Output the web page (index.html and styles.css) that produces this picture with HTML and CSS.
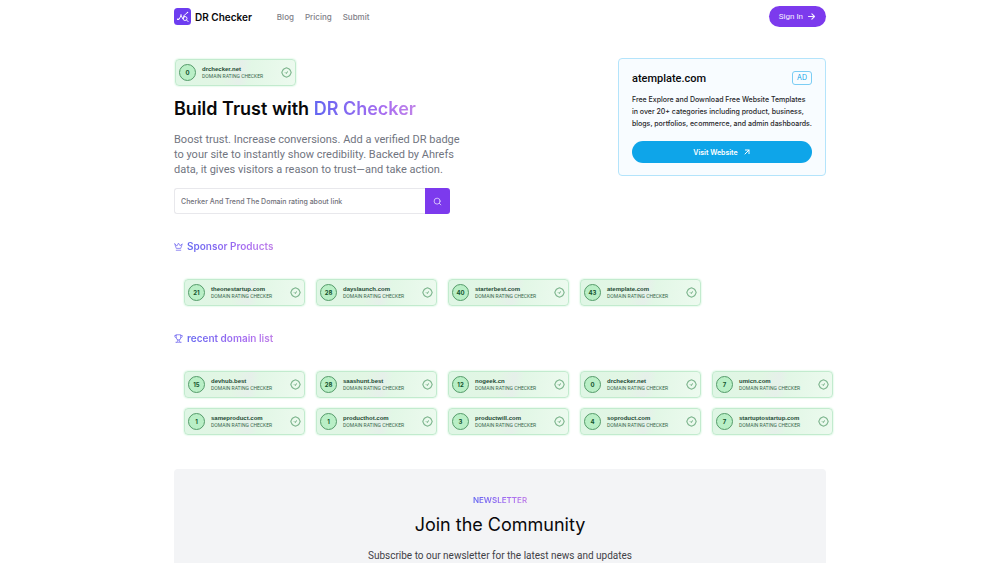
FILE: index.html
```html
<!DOCTYPE html>
<html lang="en">

<head>
  <meta charset="utf-8">
  <meta name="viewport" content="width=device-width, initial-scale=1">
  <title>DR Checker</title>
  <link rel="stylesheet" href="styles.css">
</head>

<body>
  <svg class="sprite" aria-hidden="true">
    <symbol id="icon-check" viewBox="0 0 24 24">
      <path d="M3.850 8.620a4 4 0 0 1 4.780-4.770 4 4 0 0 1 6.740 0 4 4 0 0 1 4.780 4.780 4 4 0 0 1 0 6.740 4 4 0 0 1-4.770 4.780 4 4 0 0 1-6.750 0 4 4 0 0 1-4.780-4.770 4 4 0 0 1 0-6.760z" />
      <path d="M9 12l2 2 4-4" />
    </symbol>
  </svg>

  <header class="container navbar">
    <a href="#" class="brand">
      <svg class="logo" viewBox="0 0 34 34">
        <rect width="34" height="34" rx="7" fill="#6d3df0" />
        <g fill="none" stroke="#fff" stroke-width="1.800">
          <path d="M6 23h4l4-8 4 7 3-6M18 17l9-8" />
          <circle cx="22" cy="21" r="4" />
          <path d="M25 24l4 4" />
        </g>
        <circle cx="8" cy="22" r="1.500" fill="#fff" />
        <circle cx="14" cy="14" r="1.500" fill="#fff" />
        <circle cx="27" cy="9" r="1.500" fill="#fff" />
      </svg>
      DR Checker
    </a>
    <nav>
      <a href="#">Blog</a>
      <a href="#">Pricing</a>
      <a href="#">Submit</a>
    </nav>
    <a href="#" class="sign-in">
      Sign In
      <svg class="icon" viewBox="0 0 24 24"><path d="M4 12h16M13 5l7 7-7 7" /></svg>
    </a>
  </header>

  <main class="container">
    <section class="hero">
      <div class="intro">
        <a href="#" class="badge">
          <span class="score">0</span>
          <span class="domain"><b>drchecker.net</b><small>DOMAIN RATING CHECKER</small></span>
          <svg class="check"><use href="#icon-check" /></svg>
        </a>
        <h1>Build Trust with <span class="gradient">DR Checker</span></h1>
        <p>Boost trust. Increase conversions. Add a verified DR badge<br>
          to your site to instantly show credibility. Backed by Ahrefs<br>
          data, it gives visitors a reason to trust—and take action.</p>
        <form class="search">
          <input type="text" aria-label="Domain" placeholder="Cherker And Trend The Domain rating about link">
          <button type="submit" aria-label="Search">
            <svg class="icon" viewBox="0 0 24 24"><circle cx="11" cy="11" r="8" /><path d="M17 17l4 4" /></svg>
          </button>
        </form>
      </div>

      <aside class="ad">
        <div class="ad-head">
          <h2>atemplate.com</h2>
          <span class="ad-tag">AD</span>
        </div>
        <p>Free Explore and Download Free Website Templates<br>
          in over 20+ categories including product, business,<br>
          blogs, portfolios, ecommerce, and admin dashboards.</p>
        <a href="#" class="visit">
          Visit Website
          <svg class="icon" viewBox="0 0 24 24"><path d="M6 18L18 6M7 6h11v11" /></svg>
        </a>
      </aside>
    </section>

    <section class="listing">
      <h2>
        <svg class="icon" viewBox="0 0 24 24"><path d="M2 5l4 12h12l4-12-6 5-4-7-4 7zM6 22h12" /></svg>
        <span class="gradient">Sponsor Products</span>
      </h2>
      <div class="badges" id="sponsors"></div>
    </section>

    <section class="listing">
      <h2>
        <svg class="icon" viewBox="0 0 24 24"><path d="M6 2h12v8a6 6 0 0 1-12 0zM6 4H2v2c0 3 2 4 4 4M18 4h4v2c0 3-2 4-4 4M10 16v3l-3 3M14 16v3l3 3M5 22h14" /></svg>
        <span class="gradient">recent domain list</span>
      </h2>
      <div class="badges" id="recent"></div>
    </section>

    <section class="newsletter">
      <h3 class="gradient">NEWSLETTER</h3>
      <h2>Join the Community</h2>
      <p>Subscribe to our newsletter for the latest news and updates</p>
    </section>
  </main>
  <script src="badges.js"></script>
</body>

</html>
```
FILE: styles.css
```css
* {
  box-sizing: border-box;
}

body {
  margin: 0;
  font-family: Roboto, "Liberation Sans", sans-serif;
  color: #09090b;
  background: #fff;
  overflow-x: hidden;
}

h1,
h2,
h3,
p {
  margin: 0;
}

a {
  color: inherit;
  text-decoration: none;
}

.sprite {
  display: none;
}

.container {
  max-width: 652px;
  margin: 0 auto;
}

.icon {
  width: 9px;
  height: 9px;
  fill: none;
  stroke: currentColor;
  stroke-width: 2;
  stroke-linecap: round;
  stroke-linejoin: round;
}

.gradient {
  color: transparent;
  background: linear-gradient(to right, #6366f1, #a96df0 70%, #c084e8);
  background-clip: text;
  -webkit-background-clip: text;
}

.navbar {
  display: flex;
  align-items: center;
  height: 33px;
}

.brand {
  display: flex;
  align-items: center;
  gap: 4px;
  font-family: Inter, sans-serif;
  font-size: 10px;
  font-weight: 600;
}

.logo {
  width: 17px;
  height: 17px;
}

.navbar nav {
  display: flex;
  flex: 1;
  gap: 11px;
  margin-left: 25px;
  font-family: Inter, sans-serif;
  font-size: 8px;
  font-weight: 500;
  color: #808087;
}

.sign-in {
  display: flex;
  align-items: center;
  gap: 4px;
  height: 21px;
  padding: 0 10px;
  border-radius: 11px;
  font-size: 8px;
  color: #f5f0ff;
  background: #7c3aed;
}

.sign-in .icon {
  stroke-width: 3;
}

.hero {
  display: flex;
  justify-content: space-between;
  align-items: flex-start;
  padding-top: 25px;
}

.intro .badge {
  margin: 1px;
}

.intro h1 {
  margin-top: 11px;
  font-family: Inter, sans-serif;
  font-size: 18px;
  line-height: 24px;
  font-weight: 600;
}

.intro p {
  margin-top: 11px;
  font-size: 11px;
  line-height: 15px;
  color: #71757f;
}

.search {
  display: flex;
  max-width: 276px;
  height: 26px;
  margin-top: 11px;
}

.search input {
  flex: 1;
  min-width: 0;
  padding: 0 6px;
  border: 1px solid #e8e8ec;
  border-right: 0;
  border-radius: 3px 0 0 3px;
  font: 500 7px Inter, sans-serif;
}

.search input::placeholder {
  color: #71717a;
}

.search button {
  display: flex;
  align-items: center;
  justify-content: center;
  width: 25px;
  padding: 0;
  border: 0;
  border-radius: 0 3px 3px 0;
  color: #eee5ff;
  background: #7c3aed;
}

.ad {
  padding: 12px 13px;
  border: 1px solid #b4e4fb;
  border-radius: 4px;
  font-family: Inter, sans-serif;
  background: #f8fcff;
}

.ad-head {
  display: flex;
  justify-content: space-between;
  align-items: center;
}

.ad-head h2 {
  font-family: Roboto, sans-serif;
  font-size: 11px;
  font-weight: 500;
}

.ad-tag {
  padding: 0 4px;
  border: 1px solid #7bcdf4;
  border-radius: 3px;
  font-size: 7px;
  line-height: 12px;
  color: #0ea5e9;
}

.ad p {
  margin-top: 9px;
  font-size: 7px;
  line-height: 12px;
  font-weight: 500;
  color: #27272a;
}

.visit {
  display: flex;
  align-items: center;
  justify-content: center;
  gap: 5px;
  height: 22px;
  margin-top: 11px;
  border-radius: 11px;
  font-size: 7px;
  font-weight: 600;
  color: #fff;
  background: #0ea5e9;
}

.visit .icon {
  width: 8px;
  height: 8px;
  stroke-width: 3;
}

.listing {
  padding-top: 24px;
}

.listing h2 {
  display: flex;
  align-items: center;
  gap: 4px;
  font-family: Inter, sans-serif;
  font-size: 10px;
  line-height: 16px;
  font-weight: 600;
  color: #7168ef;
}

.badges {
  display: flex;
  flex-wrap: wrap;
  gap: 10px 11px;
  margin: 25px -8px 0 10px;
}

.badge {
  display: flex;
  align-items: center;
  width: 121px;
  height: 27px;
  padding: 0 3px;
  border: 1px solid #c2ebce;
  border-radius: 4px;
  background: linear-gradient(100deg, #dff6e5, #e2f6e4 40%, #e6f0ea 54%, #e2f7e6 62%, #edfaef);
  box-shadow: 0 0 2px #b9efc8;
}

.score {
  width: 17px;
  border: 1px solid #559b6a;
  border-radius: 50%;
  font-family: Inter, sans-serif;
  font-size: 6px;
  line-height: 15px;
  font-weight: 700;
  text-align: center;
  color: #14532d;
  background: #b9efc6;
}

.domain {
  display: flex;
  flex: 1;
  flex-direction: column;
  margin-left: 6px;
  white-space: nowrap;
}

.domain b {
  font-family: "Liberation Sans", Arial, sans-serif;
  font-size: 6px;
  line-height: 7px;
  color: #1d4a35;
}

.domain small {
  font-size: 5px;
  line-height: 6px;
  color: #39684d;
}

.check {
  width: 11px;
  height: 11px;
  fill: none;
  stroke: #4b9663;
  stroke-width: 2;
}

.newsletter {
  margin-top: 34px;
  padding: 24px 24px 48px;
  border-radius: 4px;
  text-align: center;
  background: #f3f4f6;
}

.newsletter h3 {
  width: fit-content;
  margin: 0 auto;
  font-family: Inter, sans-serif;
  font-size: 8px;
  line-height: 14px;
  font-weight: 600;
}

.newsletter h2 {
  margin-top: 6px;
  font-family: Inter, sans-serif;
  font-size: 18px;
  line-height: 24px;
  font-weight: 400;
}

.newsletter p {
  margin-top: 11px;
  font-size: 10px;
  line-height: 16px;
  color: #3f3f46;
}
```
FILE: badges.js
```js
var sponsors = [
  [21, 'theonestartup.com'],
  [28, 'dayslaunch.com'],
  [40, 'starterbest.com'],
  [43, 'atemplate.com']
]

var recent = [
  [15, 'devhub.best'],
  [28, 'saashunt.best'],
  [12, 'nogeek.cn'],
  [0, 'drchecker.net'],
  [7, 'umicn.com'],
  [1, 'sameproduct.com'],
  [1, 'producthot.com'],
  [3, 'productwill.com'],
  [4, 'soproduct.com'],
  [7, 'startuptostartup.com']
]

var render = function (id, items) {
  document.getElementById(id).innerHTML = items.map(function (item) {
    return '<a href="#" class="badge"><span class="score">' + item[0] + '</span>' +
      '<span class="domain"><b>' + item[1] + '</b><small>DOMAIN RATING CHECKER</small></span>' +
      '<svg class="check"><use href="#icon-check" /></svg></a>'
  }).join('')
}

render('sponsors', sponsors)
render('recent', recent)
```
